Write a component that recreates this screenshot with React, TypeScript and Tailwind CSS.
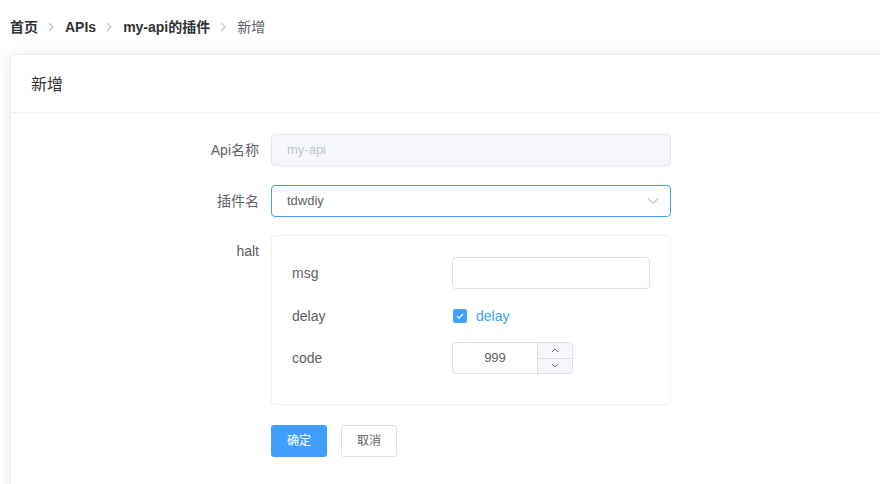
import React from "react";

const FONT = { fontFamily: '"Liberation Sans", "Noto Sans CJK SC", sans-serif' };

function Sep() {
  return (
    <svg width="6" height="10" viewBox="0 0 6 10" className="ml-[10px] mr-[11px]" fill="none">
      <path d="M1 1l4 4-4 4" stroke="#c0c4cc" strokeWidth="1.2" />
    </svg>
  );
}

function Label({ children }: { children: React.ReactNode }) {
  return (
    <div className="w-[260px] shrink-0 pr-[12px] text-right text-[14px] leading-[32px] text-[#606266]">
      {children}
    </div>
  );
}

export default function App() {
  return (
    <div className="h-[484px] w-[880px] overflow-hidden bg-white" style={FONT}>
      <div className="flex h-[54px] items-center pl-[10px] text-[14px]">
        <span className="font-bold text-[#303133]">首页</span>
        <Sep />
        <span className="font-bold text-[#303133]">APIs</span>
        <Sep />
        <span className="font-bold text-[#303133]">my-api的插件</span>
        <Sep />
        <span className="text-[#606266]">新增</span>
      </div>
      <div className="ml-[10px] w-[900px] rounded-[4px] border border-[#ebeef5] bg-white shadow-[0_2px_12px_0_rgba(0,0,0,0.1)]">
        <div className="flex h-[58px] items-center border-b border-[#ebeef5] px-[20px] pt-[2px] text-[16px] text-[#303133]">
          新增
        </div>
        <div className="pt-[21px] pb-[20px]">
          <div className="flex">
            <Label>Api名称</Label>
            <div className="flex h-[32px] w-[400px] items-center rounded-[4px] border border-[#e4e7ed] bg-[#f5f7fa] px-[15px] text-[13px] text-[#c0c4cc]">
              my-api
            </div>
          </div>
          <div className="mt-[19px] flex">
            <Label>插件名</Label>
            <div className="flex h-[32px] w-[400px] items-center justify-between rounded-[4px] border border-[#409eff] pl-[15px] pr-[11px] text-[13px] text-[#606266]">
              <span>tdwdiy</span>
              <svg width="12" height="8" viewBox="0 0 12 8" fill="none">
                <path d="M1 1.5l5 5 5-5" stroke="#c0c4cc" strokeWidth="1.1" />
              </svg>
            </div>
          </div>
          <div className="mt-[18px] flex">
            <div className="w-[260px] shrink-0 pr-[12px] text-right text-[14px] leading-[32px] text-[#606266]">
              halt
            </div>
            <div className="w-[400px] rounded-[4px] border border-[#ebeef5] px-[20px] pt-[21px] pb-[30px]">
              <div className="flex h-[32px] items-center">
                <div className="w-[160px] text-[14px] text-[#606266]">msg</div>
                <div className="h-[32px] flex-1 rounded-[4px] border border-[#dcdfe6]" />
              </div>
              <div className="mt-[11px] flex h-[32px] items-center">
                <div className="w-[160px] text-[14px] text-[#606266]">delay</div>
                <div className="ml-[1px] flex h-[14px] w-[14px] items-center justify-center rounded-[2px] bg-[#409eff]">
                  <svg width="10" height="8" viewBox="0 0 10 8" fill="none">
                    <path d="M2 4.2l2 2 4-4.2" stroke="white" strokeWidth="1.2" />
                  </svg>
                </div>
                <span className="ml-[9px] text-[14px] text-[#409eff]">delay</span>
              </div>
              <div className="mt-[10px] flex h-[32px] items-center">
                <div className="w-[160px] text-[14px] text-[#606266]">code</div>
                <div className="flex h-[32px] w-[121px] rounded-[4px] border border-[#dcdfe6]">
                  <div className="flex flex-1 items-center justify-center text-[13px] text-[#606266]">999</div>
                  <div className="flex w-[35px] flex-col border-l border-[#dcdfe6] bg-[#f5f7fa]">
                    <div className="flex flex-1 items-center justify-center border-b border-[#dcdfe6]">
                      <svg width="8" height="5" viewBox="0 0 8 5" fill="none">
                        <path d="M1 4l3-3 3 3" stroke="#606266" strokeWidth="0.9" />
                      </svg>
                    </div>
                    <div className="flex flex-1 items-center justify-center">
                      <svg width="8" height="5" viewBox="0 0 8 5" fill="none">
                        <path d="M1 1l3 3 3-3" stroke="#606266" strokeWidth="0.9" />
                      </svg>
                    </div>
                  </div>
                </div>
              </div>
            </div>
          </div>
          <div className="mt-[20px] flex">
            <div className="w-[260px] shrink-0" />
            <button className="h-[32px] w-[56px] rounded-[3px] bg-[#409eff] text-[12px] text-white">确定</button>
            <button className="ml-[14px] h-[32px] w-[56px] rounded-[3px] border border-[#dcdfe6] bg-white text-[12px] text-[#606266]">
              取消
            </button>
          </div>
          <div className="h-[18px]" />
        </div>
      </div>
    </div>
  );
}
